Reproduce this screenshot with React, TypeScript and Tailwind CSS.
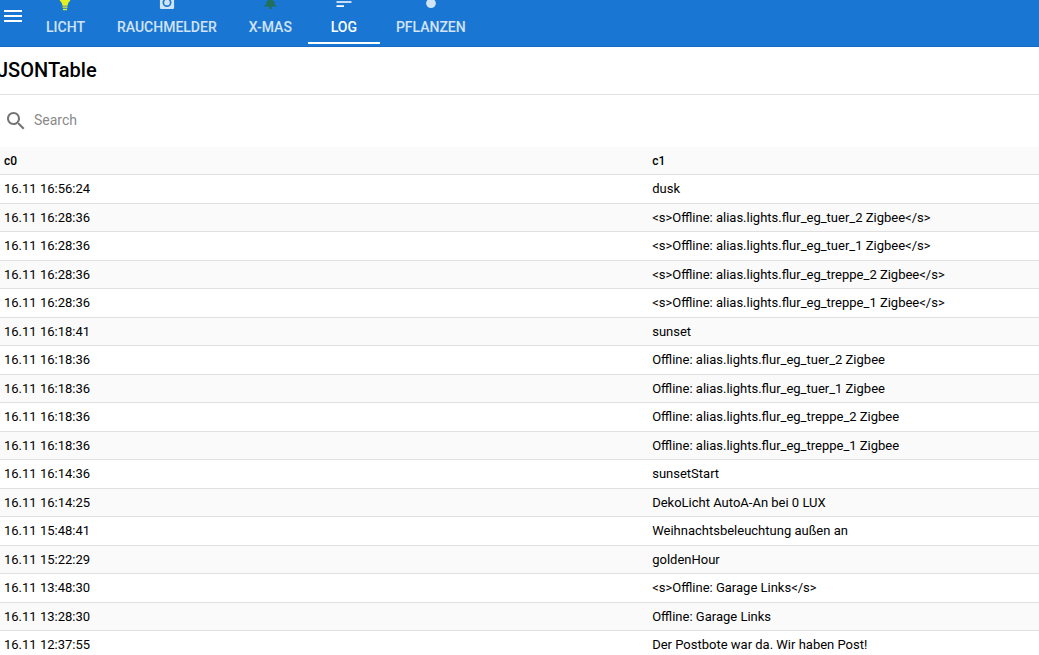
import { useState } from 'react'

type Row = [string, string]

const rows: Row[] = [
    ['16.11 16:56:24', 'dusk'],
    ['16.11 16:28:36', '<s>Offline: alias.lights.flur_eg_tuer_2 Zigbee</s>'],
    ['16.11 16:28:36', '<s>Offline: alias.lights.flur_eg_tuer_1 Zigbee</s>'],
    ['16.11 16:28:36', '<s>Offline: alias.lights.flur_eg_treppe_2 Zigbee</s>'],
    ['16.11 16:28:36', '<s>Offline: alias.lights.flur_eg_treppe_1 Zigbee</s>'],
    ['16.11 16:18:41', 'sunset'],
    ['16.11 16:18:36', 'Offline: alias.lights.flur_eg_tuer_2 Zigbee'],
    ['16.11 16:18:36', 'Offline: alias.lights.flur_eg_tuer_1 Zigbee'],
    ['16.11 16:18:36', 'Offline: alias.lights.flur_eg_treppe_2 Zigbee'],
    ['16.11 16:18:36', 'Offline: alias.lights.flur_eg_treppe_1 Zigbee'],
    ['16.11 16:14:36', 'sunsetStart'],
    ['16.11 16:14:25', 'DekoLicht AutoA-An bei 0 LUX'],
    ['16.11 15:48:41', 'Weihnachtsbeleuchtung außen an'],
    ['16.11 15:22:29', 'goldenHour'],
    ['16.11 13:48:30', '<s>Offline: Garage Links</s>'],
    ['16.11 13:28:30', 'Offline: Garage Links'],
    ['16.11 12:37:55', 'Der Postbote war da. Wir haben Post!'],
]

const tabs = [
    { label: 'LICHT', color: 'text-[#e6f01e]', icon: <path d="M9.500 20v1a.8.8 0 0 0 .8.8h3.400a.8.8 0 0 0 .8-.8v-1zM9 17.500h6V19H9zM12 0C8 0 5 3.140 5 7c0 2.500 1.200 4.500 3 5.800l1 3.700h6l1-3.700c1.800-1.300 3-3.300 3-5.800 0-3.860-3-7-7-7z" /> },
    { label: 'RAUCHMELDER', color: 'text-white/80', icon: <path fillRule="evenodd" d="M5 3h14a1.500 1.500 0 0 1 1.500 1.500V19a1.500 1.500 0 0 1-1.500 1.500H5A1.500 1.500 0 0 1 3.500 19V4.500A1.500 1.500 0 0 1 5 3zm7 4.200a5.400 5.400 0 1 0 0 10.800 5.400 5.400 0 0 0 0-10.800zm0 2a3.400 3.400 0 1 1 0 6.800 3.400 3.400 0 0 1 0-6.800z" /> },
    { label: 'X-MAS', color: 'text-[#23705a]', icon: <path d="M11 20.500v-3H4.500l4-4h-2l3.500-4H8.500L12.500 3l4 6.500H15l3.500 4h-2l4 4H14v3z" /> },
    { label: 'LOG', color: 'text-white', icon: <path d="M3 18h9v-2H3v2zM3 6v2h18V6H3zm0 7h18v-2H3v2z" /> },
    { label: 'PFLANZEN', color: 'text-white/80', icon: <circle cx="12" cy="13.500" r="5.800" /> },
]

export default function App() {
    const [active, setActive] = useState('LOG')
    const [query, setQuery] = useState('')

    const visible = rows.filter((row) => row.join(' ').toLowerCase().includes(query.toLowerCase()))

    return (
        <div className="h-screen overflow-hidden bg-white font-[Roboto,sans-serif] text-black">
            {/* App bar */}
            <header className="flex h-[47px] items-end overflow-hidden border-b border-[#176bc0] bg-[#1976d2]">
                <button type="button" aria-label="Menu" className="mb-[18px] h-6 w-[30px] shrink-0 pl-px text-white">
                    <svg viewBox="0 0 24 24" className="size-6 fill-current"><path d="M3 18h18v-2H3v2zm0-5h18v-2H3v2zm0-7v2h18V6H3z" /></svg>
                </button>
                <nav className="mb-0.5 flex items-end">
                    {tabs.map((tab) => (
                        <button
                            key={tab.label}
                            type="button"
                            onClick={() => setActive(tab.label)}
                            className={`flex h-[72px] shrink-0 flex-col items-center justify-end border-b-2 px-4 pb-[5px] text-sm font-medium ${active === tab.label ? 'min-w-[72px] border-white text-white' : 'border-transparent text-white/80'}`}
                        >
                            <svg viewBox="0 0 24 24" className={`mb-[5px] size-5 fill-current ${tab.color}`}>{tab.icon}</svg>
                            {tab.label}
                        </button>
                    ))}
                </nav>
            </header>

            <h1 className="-ml-[3px] flex h-12 items-center border-b border-[#e0e0e0] pb-0.5 text-xl font-medium">JSONTable</h1>

            {/* Search */}
            <label className="flex h-[52px] items-center gap-1.5 pl-1">
                <svg viewBox="0 0 24 24" className="size-6 shrink-0 fill-[#757575]"><path d="M15.500 14h-.79l-.28-.27C15.410 12.590 16 11.110 16 9.500 16 5.910 13.090 3 9.500 3S3 5.910 3 9.500 5.910 16 9.500 16c1.610 0 3.090-.59 4.230-1.570l.27.28v.79l5 4.990L20.490 19l-4.990-5zm-6 0C7.010 14 5 11.990 5 9.500S7.010 5 9.500 5 14 7.010 14 9.500 11.990 14 9.500 14z" /></svg>
                <input
                    value={query}
                    onChange={(e) => setQuery(e.target.value)}
                    aria-label="Search"
                    placeholder="Search"
                    className="min-w-0 flex-1 pb-0.5 text-sm outline-none placeholder:text-[#8a8a8a]"
                />
            </label>

            <table className="w-full table-fixed border-separate border-spacing-0 text-left text-[13px] leading-5">
                <thead>
                    <tr className="h-7 bg-[#fafafa] text-xs leading-5">
                        <th className="w-[62%] border-b border-[#e0e0e0] px-1 pt-1 align-top font-medium">c0</th>
                        <th className="border-b border-[#e0e0e0] px-2 pt-1 align-top font-medium">c1</th>
                    </tr>
                </thead>
                <tbody>
                    {visible.map(([time, message], i) => (
                        <tr key={i} className="odd:h-[29px] even:h-7 even:bg-[#fafafa]">
                            <td className="border-b border-[#e0e0e0] px-1 pt-1 align-top">{time}</td>
                            <td className="border-b border-[#e0e0e0] px-2 pt-1 align-top">{message}</td>
                        </tr>
                    ))}
                </tbody>
            </table>
        </div>
    )
}
